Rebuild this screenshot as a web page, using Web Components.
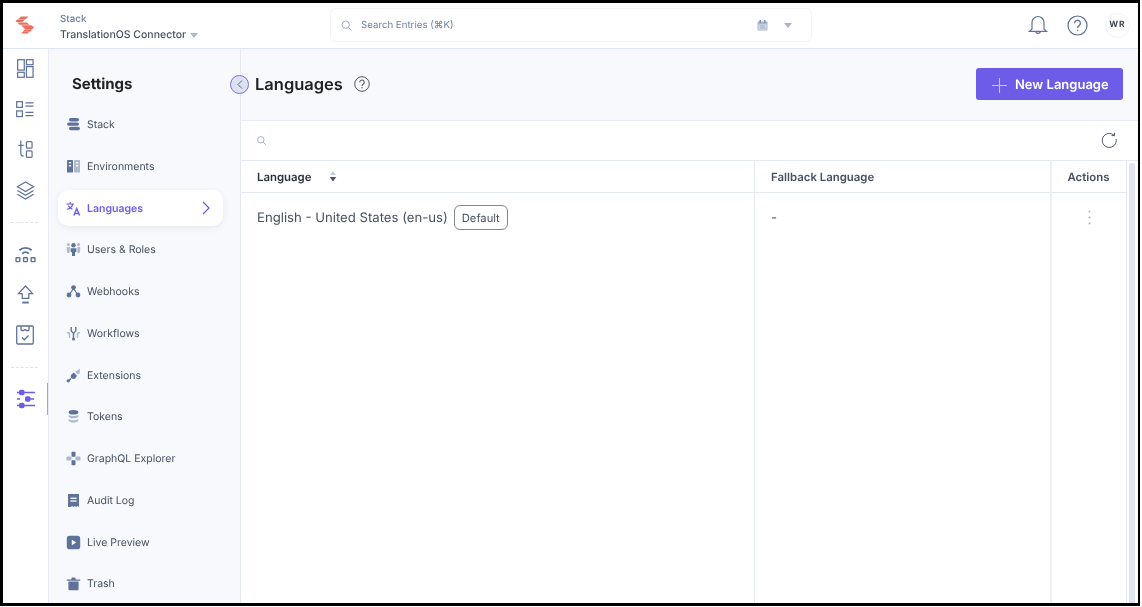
<!DOCTYPE html>
<html lang="en"><head><meta charset="utf-8"><title>Languages</title>
<style>
html,body{margin:0;padding:0;height:100%;overflow:hidden;background:#fff}
body{font-family:Inter,"Noto Sans",sans-serif;-webkit-font-smoothing:antialiased;text-rendering:geometricPrecision}
</style></head><body>
<app-shell>
  <top-bar slot="top"></top-bar>
  <side-rail slot="rail"></side-rail>
  <settings-nav slot="nav"></settings-nav>
  <languages-page slot="main"></languages-page>
</app-shell>
<script>
const ic = {
 stack:'<rect x="3" y="1" width="10" height="3.4" rx="1.7" fill="#5f7299"/><rect x="1" y="5.4" width="12" height="3.4" rx="1.7" fill="#5f7299"/><rect x="3" y="9.8" width="11" height="3.4" rx="1.7" fill="#5f7299"/>',
 env:'<rect x="1" y="1" width="6" height="12.5" rx=".6" fill="#5f7299"/><rect x="8" y="1" width="6" height="12.5" rx=".6" fill="#aebad0"/><rect x="2.8" y="3" width="2.4" height="1.4" fill="#fff"/><rect x="2.8" y="6" width="2.4" height="1.4" fill="#fff"/><rect x="9.8" y="3" width="2.4" height="1.4" fill="#fff"/><rect x="9.8" y="6" width="2.4" height="1.4" fill="#fff"/>',
 lang:'<g fill="none" stroke="#6c5ce7" stroke-width="1.2"><path d="M.5 3h7.500M4.200 1V3M6.800 3C6.200 5.400 4.200 7.400 1.200 8.400M2.200 4.400c.8 1.600 2.400 3 4.200 3.700"/><path d="M7.800 14.500l2.900-7 2.900 7M8.800 12.500h3.800" stroke-width="1.400"/></g>',
 users:'<circle cx="7.5" cy="3.2" r="2.2" fill="#5f7299"/><path d="M4.600 6.200h5.800v3.400L9 10.400v3.600H6v-3.600L4.600 9.600z" fill="#5f7299"/><circle cx="2.400" cy="2.600" r="1.500" fill="#aebad0"/><circle cx="12.600" cy="2.600" r="1.500" fill="#aebad0"/><path d="M.8 5h2.900v4.400L3.300 11H1.600L.8 9zM11.300 5h2.900V9l-.8 2h-1.700l-.4-1.600z" fill="#aebad0"/>',
 hook:'<path d="M7.500 4.500L3 11M7.500 4.500L12 11" stroke="#5f7299" stroke-width="1.200"/><circle cx="7.500" cy="3.600" r="2.400" fill="#5f7299"/><circle cx="3" cy="11" r="2.400" fill="#5f7299"/><circle cx="12" cy="11" r="2.400" fill="#5f7299"/>',
 flow:'<g fill="none" stroke-width="1.400"><path d="M5.200 1v3.600c0 1.400 2.300 1.400 2.300 3.200v5M9.800 1v3.600c0 1.400-2.300 1.400-2.300 3.200" stroke="#5f7299"/><path d="M1 6.500c1.500 0 2.600.8 2.600 2.400V12M14 6.500c-1.500 0-2.600.8-2.600 2.400V12" stroke="#aebad0"/></g><circle cx="7.500" cy="13" r="1.500" fill="#5f7299"/>',
 ext:'<path d="M7.800 4.500l3.200 3.200-1.500 2.500c-1 1-2.800 1-4 0-1-1-1.100-2.700 0-3.800z" fill="#5f7299"/><path d="M5 10.500L2.500 13" stroke="#5f7299" stroke-width="1.600"/><circle cx="2.200" cy="12.800" r="1.600" fill="#5f7299"/><path d="M9.500 3.500L14 .8l-.5 5L11.500 6.500z" fill="#aebad0"/>',
 token:'<ellipse cx="7.500" cy="3.200" rx="4.800" ry="2.300" fill="#5f7299"/><path d="M2.700 5.500c1 2 8.600 2 9.600 0v2.300c-1 2-8.600 2-9.600 0z" fill="#aebad0"/><path d="M2.700 9.700c1 2 8.600 2 9.600 0v2c-1 2.400-8.600 2.400-9.600 0z" fill="#aebad0"/>',
 graph:'<rect x="5.500" y=".8" width="4" height="5" rx=".8" fill="#5f7299"/><rect x="5.500" y="9.200" width="4" height="5" rx=".8" fill="#5f7299"/><rect x=".5" y="5.500" width="5" height="4" rx=".8" fill="#aebad0"/><rect x="9.500" y="5.500" width="5" height="4" rx=".8" fill="#aebad0"/>',
 audit:'<path d="M2 1h11v13l-1.400-.9-1.300.9-1.400-.9-1.400.9-1.400-.9-1.300.9L2 14z" fill="#5f7299"/><rect x="4.400" y="4.600" width="6.200" height="1.300" fill="#fff"/><rect x="4.400" y="7.400" width="6.200" height="1.300" fill="#fff"/>',
 live:'<rect x=".8" y=".8" width="13.400" height="13.400" rx="2.800" fill="#5f7299"/><path d="M5.800 4.800l4.400 2.700-4.400 2.700z" fill="#fff"/>',
 trash:'<path d="M.8 3.400h13.400v1.300H.8zM5.200 3.400l.6-2h3.400l.6 2" fill="#5f7299"/><path d="M2.400 5.600h10.200v7.400c0 .8-.6 1.300-1.300 1.300H3.700c-.7 0-1.300-.5-1.300-1.300z" fill="#5f7299"/>'
};

customElements.define('app-shell', class extends HTMLElement{
 constructor(){super();this.attachShadow({mode:'open'}).innerHTML=`<style>
 :host{display:block;box-sizing:border-box;width:1142px;height:607px;background:#fff;overflow:hidden;padding:0 2px 1px 0}
 .f{box-sizing:border-box;height:100%;border:solid #000;border-width:3px 2px 3px 3px;overflow:hidden}
 .g{display:grid;grid-template-columns:46px 192px 1fr;grid-template-rows:46px 1fr;height:100%;filter:blur(.3px)}
 .t{grid-column:1/-1;min-width:0}
 .c{min-height:0;min-width:0;overflow:hidden}
 .m{overflow:visible}
 </style><div class="f"><div class="g"><div class="t"><slot name="top"></slot></div><div class="c"><slot name="rail"></slot></div><div class="c"><slot name="nav"></slot></div><div class="c m"><slot name="main"></slot></div></div></div>`}
});

customElements.define('top-bar', class extends HTMLElement{
 constructor(){super();this.attachShadow({mode:'open'}).innerHTML=`<style>
 :host{display:flex;align-items:center;box-sizing:border-box;height:46px;border-bottom:1px solid #dde5f4;background:#fff;position:relative}
 .logo{width:45px;display:flex;justify-content:center;flex:none;margin-top:-1px}
 .st{width:282px;flex:none;padding-left:12px;box-sizing:border-box;margin-top:4px}
 .a{font-size:9.800px;font-weight:500;color:#6c80a5;line-height:12px;margin-bottom:2px}
 .b{font-size:10.500px;font-weight:500;color:#475161;line-height:13px;display:flex;align-items:center;gap:4px;white-space:nowrap}
 .b i{width:0;height:0;border:4px solid transparent;border-top:5px solid #a9b6cd;border-bottom:0;margin-top:1px}
 .s{box-sizing:border-box;width:482px;height:34px;margin-top:-1px;border:1px solid #f0f3f8;border-radius:6px;display:flex;align-items:center;padding-left:10px;flex:none}
 .s span{font-size:9.700px;color:#6c7fa3;margin-left:9px;flex:1;font-weight:400}
 .s svg.cal{margin-right:16px}
 .s i{width:0;height:0;border:4px solid transparent;border-top:5px solid #a9b6cd;border-bottom:0;margin-right:19px;margin-top:1px}
 .r{margin-left:auto;display:flex;align-items:center;margin-top:-1px}
 .r svg{display:block}
 .wr{width:25px;height:25px;border:1px solid #f3f5f9;border-radius:50%;box-sizing:border-box;font-size:8.500px;font-weight:700;letter-spacing:1px;color:#3e4653;display:flex;align-items:center;justify-content:center;margin:0 8px 0 17px}
 </style>
 <div class="logo"><svg width="21" height="18" viewBox="0 0 21 18"><g fill="#ea6f5f"><path d="M6 .5h7.500L10.500 3.200H3z"/><path d="M.5 5L2.500 3.500h7.500L7.500 6H1.500z"/><path d="M2 6.500h10l2.500 2.200H4.500z"/><path d="M6 9.200h10.500l2.500 2.400-1.500 1.400H10z"/><path d="M10 13.300h7.500L15 15.800H7.500z"/><path d="M7.500 16.100h6.500l-1.500 1.500H6z"/></g></svg></div>
 <div class="st"><div class="a">Stack</div><div class="b">TranslationOS Connector <i></i></div></div>
 <div class="s"><svg width="11" height="11" viewBox="0 0 11 11" fill="none" stroke="#a3b0c8" stroke-width="1"><circle cx="4.700" cy="4.700" r="3.700"/><path d="M7.500 7.500l3 3"/></svg><span>Search Entries (⌘K)</span>
 <svg class="cal" width="11" height="11" viewBox="0 0 11 11"><rect x=".5" y="1.500" width="10" height="9" rx="1" fill="#a9b6cd"/><rect x="1.500" y="4.500" width="8" height="5" fill="#dfe5ef"/><rect x="2.500" y="0" width="1.500" height="3" fill="#7d8eae"/><rect x="7" y="0" width="1.500" height="3" fill="#7d8eae"/><path d="M2.500 6h6M2.500 8h6" stroke="#8393b0" stroke-width=".8"/></svg><i></i></div>
 <div class="r">
 <svg width="22" height="22" viewBox="0 0 22 22" fill="none" stroke="#5f7299" stroke-width="1.200" style="margin-right:18px"><path d="M5 15V8.500a6 6 0 0 1 12 0V15l2.500 2.300h-17zM8.500 17.500a2.600 2.600 0 0 0 5 0"/></svg>
 <svg width="21" height="21" viewBox="0 0 21 21" fill="none" stroke="#5f7299" stroke-width="1.200"><circle cx="10.500" cy="10.500" r="9.500"/><path d="M7.600 8.200a2.900 2.900 0 1 1 4.500 2.400c-1 .7-1.600 1.300-1.600 2.500" stroke-width="1.300"/><circle cx="10.500" cy="15.500" r=".8" fill="#5f7299" stroke="none"/></svg>
 <div class="wr">WR</div></div>`}
});

customElements.define('rail-icon', class extends HTMLElement{
 constructor(){super();this.attachShadow({mode:'open'}).innerHTML=`<style>
 :host{display:flex;align-items:center;justify-content:center;height:40.500px;position:relative}
 :host([active])::after{content:"";position:absolute;right:-1px;top:4px;bottom:4px;width:1px;background:#a79ff2}
 </style><slot></slot>`}
});
customElements.define('side-rail', class extends HTMLElement{
 constructor(){super();const s=`fill="none" stroke="#5f7299" stroke-width="1.300"`;
 this.attachShadow({mode:'open'}).innerHTML=`<style>
 :host{display:block;box-sizing:border-box;height:100%;background:#fff;border-right:1px solid #e8ecf7;padding-right:1px}
 hr{border:0;border-top:1px dashed #dfe3e9;margin:11.500px 9px 11px 8px;height:0}
 svg{display:block}
 </style>
 <rail-icon style="margin-top:-.5px"><svg width="17" height="19" viewBox="0 0 18 20" ${s}><rect x=".7" y=".7" width="7" height="11"/><rect x=".7" y="14" width="7" height="5.300"/><rect x="10" y=".7" width="7" height="5.300"/><rect x="10" y="8" width="7" height="11.300"/></svg></rail-icon>
 <rail-icon><svg width="18" height="17" viewBox="0 0 19 18" ${s}><rect x=".7" y=".7" width="6" height="6"/><rect x=".7" y="10.500" width="6" height="6"/><path d="M10 2h8.500M10 5.500h8.500M10 12h8.500M10 15.500h8.500"/></svg></rail-icon>
 <rail-icon><svg width="15" height="19" viewBox="0 0 16 20" ${s}><path d="M3 .5V14.500c0 1.500 1 2.500 3 2.500M.5 5.500H6"/><rect x="9" y="1.500" width="6" height="7" rx="1"/><rect x="9" y="11.500" width="6" height="7" rx="1"/></svg></rail-icon>
 <rail-icon><svg width="19" height="19" viewBox="0 0 20 20" ${s}><path d="M10 1l8.500 5L10 11 1.500 6z"/><path d="M1.500 10L10 15l8.500-5M1.500 14L10 19l8.500-5"/></svg></rail-icon>
 <hr>
 <rail-icon><svg width="21" height="17" viewBox="0 0 22 18" fill="none" stroke="#5f7299" stroke-width="1.500"><path d="M4.500 4.500a9.500 9.500 0 0 1 13 0M7.500 8a5 5 0 0 1 7 0" stroke-width="2"/><rect x="1" y="12.500" width="4" height="4" rx=".5"/><rect x="9" y="12.500" width="4" height="4" rx=".5"/><rect x="17" y="12.500" width="4" height="4" rx=".5"/></svg></rail-icon>
 <rail-icon><svg width="17" height="19" viewBox="0 0 18 20" ${s}><path d="M9 1l7.500 8H12.500v5H5.500V9H1.500z"/><path d="M5.500 18.500h7" stroke-width="2"/></svg></rail-icon>
 <rail-icon><svg width="18" height="20" viewBox="0 0 18 20" ${s}><rect x=".7" y="1" width="16.600" height="18" rx="1"/><path d="M5 1v3.500q0 1 1 1 h1.500l1.500 -1 1.500 1H12q1 0 1 -1V1"/><path d="M6 12.500l2.300 2.300L12.500 10.500"/></svg></rail-icon>
 <hr style="margin-top:11px">
 <rail-icon active><svg width="19" height="20" viewBox="0 0 19 20"><g fill="none" stroke="#6c5ce7" stroke-width="1.300"><path d="M1 3.500h18M1 10h3M13 10h5M1 16.500h18"/></g><g fill="#6c5ce7"><rect x="3" y=".8" width="5.500" height="5.500" rx="1.800"/><rect x="9" y="7.200" width="5.500" height="5.500" rx="1.800"/><rect x="3" y="13.800" width="5.500" height="5.500" rx="1.800"/></g></svg></rail-icon>`}
});

customElements.define('nav-item', class extends HTMLElement{
 constructor(){super();this.attachShadow({mode:'open'})}
 connectedCallback(){const k=this.getAttribute('icon'),act=this.hasAttribute('active');
 this.shadowRoot.innerHTML=`<style>
 :host{display:flex;height:41.750px;align-items:center}
 .i{box-sizing:border-box;width:165px;height:${act?36:30}px;margin-left:9px;padding:0 13px 0 8px;display:flex;align-items:center;gap:6px;font-size:10.500px;color:#475161;border-radius:10px;${act?'background:#fff;box-shadow:0 2px 6px rgba(108,128,165,.12);color:#6c5ce7;font-weight:600;':''}}
 svg.k{width:15px;height:15px;flex:none}
 .t{flex:1}
 </style><div class="i"><svg class="k" viewBox="0 0 15 15">${ic[k]}</svg><span class="t"><slot></slot></span>${act?'<svg width="8" height="14" viewBox="0 0 8 14" fill="none" stroke="#6c5ce7" stroke-width="1.300"><path d="M1 1l6 6-6 6"/></svg>':''}</div>`}
});
customElements.define('settings-nav', class extends HTMLElement{
 constructor(){super();this.attachShadow({mode:'open'}).innerHTML=`<style>
 :host{display:block;box-sizing:border-box;height:100%;background:#f7f9fc;border-right:1px solid #e4e9f5;position:relative}
 h2{margin:0;padding:26px 0 0 23px;font-size:15px;font-weight:700;color:#222;line-height:18px;height:54.700px;box-sizing:border-box}
 </style><h2>Settings</h2><div>
 <nav-item icon="stack">Stack</nav-item>
 <nav-item icon="env">Environments</nav-item>
 <nav-item icon="lang" active>Languages</nav-item>
 <nav-item icon="users">Users &amp; Roles</nav-item>
 <nav-item icon="hook">Webhooks</nav-item>
 <nav-item icon="flow">Workflows</nav-item>
 <nav-item icon="ext">Extensions</nav-item>
 <nav-item icon="token">Tokens</nav-item>
 <nav-item icon="graph">GraphQL Explorer</nav-item>
 <nav-item icon="audit">Audit Log</nav-item>
 <nav-item icon="live">Live Preview</nav-item>
 <nav-item icon="trash">Trash</nav-item></div>`}
});

customElements.define('languages-page', class extends HTMLElement{
 constructor(){super();this.attachShadow({mode:'open'}).innerHTML=`<style>
 :host{display:flex;flex-direction:column;height:100%;background:#fff;position:relative}
 .h{box-sizing:border-box;height:72px;flex:none;background:#f7f9fc;border-bottom:1px solid #e8ecf5;display:flex;align-items:center;padding:0 15px 0 14px}
 h1{margin:0;font-size:16.500px;font-weight:600;color:#222;line-height:20px;margin-top:-2px}
 .q{margin-left:11px;margin-top:-2px}
 .btn{margin-left:auto;box-sizing:border-box;width:147px;height:32px;background:#6c5ce7;border-radius:3px;color:#fff;font-size:13px;font-weight:600;display:flex;align-items:center;padding:2px 0 0 16px;gap:8px;margin-top:-1px;white-space:nowrap}
 .tb{box-sizing:border-box;height:40px;flex:none;border-bottom:1px solid #e3e8f3;display:flex;align-items:center;justify-content:space-between;padding:0 20px 0 16px}
 .tw{display:grid;grid-template-columns:514px 297px 75px 1fr;grid-template-rows:32px 1fr;flex:1;min-height:0}
 .c{box-sizing:border-box;display:flex;align-items:center}
 .hd{border-bottom:1px solid #e3e8f3;font-size:11.400px;font-weight:600;height:32px}
 .c1{border-right:1px solid #e3e8f3;padding-left:16px}
 .c2{border-right:2px solid #efefef;padding-left:16px}
 .c3{border-right:1px solid #e3e8f3;padding-left:15.500px}
 .hd.c1{color:#2d333d}
 .hd.c2,.hd.c3{color:#475161}
 .rw{align-items:flex-start;padding-top:12px;font-size:13.150px;color:#475161}
 .sb{grid-row:1/3;grid-column:4;padding:2px 3px 0 2px;display:flex}
 .sb i{display:block;width:6px;background:#dfe4f0;border-radius:4px 4px 0 0}
 .sort{margin-left:18px;display:block}
 .bd{box-sizing:border-box;height:25px;padding:0 7px;margin-left:6px;border:1px solid #808792;border-radius:6px;font-size:11.200px;color:#475161;display:flex;align-items:center}
 .lang{line-height:27px}
 .dots{display:block;margin:5px 0 0 20px}
 .col{position:absolute;left:-11px;top:26px;width:19px;height:19px;box-sizing:border-box;border:1px solid #7c6cf0;border-radius:50%;background:#dde2f3;display:flex;align-items:center;justify-content:center;z-index:2}
 </style>
 <div class="col"><svg width="6" height="9" viewBox="0 0 6 9" fill="none" stroke="#5f6b80" stroke-width="1"><path d="M5 .5l-4 4 4 4"/></svg></div>
 <div class="h"><h1>Languages</h1>
 <svg class="q" width="16" height="16" viewBox="0 0 16 16" fill="none" stroke="#4e5866" stroke-width="1"><circle cx="8" cy="8" r="7.300"/><path d="M5.800 6.300a2.200 2.200 0 1 1 3.400 1.800c-.8.500-1.200 1-1.200 1.900" stroke-width="1.100"/><circle cx="8" cy="11.800" r=".7" fill="#4e5866" stroke="none"/></svg>
 <div class="btn"><svg width="15" height="15" viewBox="0 0 15 15" stroke="#c9c2f8" stroke-width="1.100"><path d="M7.500 0v15M0 7.500h15"/></svg>New Language</div></div>
 <div class="tb"><svg width="9" height="9" viewBox="0 0 9 9" fill="none" stroke="#a3b0c8" stroke-width="1"><circle cx="3.800" cy="3.800" r="3.200"/><path d="M6.200 6.200L8.800 8.800"/></svg>
 <svg width="17" height="17" viewBox="0 0 17 17" fill="none" stroke="#4e5866" stroke-width="1"><path d="M13.300 3.600a7 7 0 1 0 1.800 3.400"/><path d="M10.500 3.600h3V.8"/></svg></div>
 <div class="tw">
 <div class="c hd c1">Language<svg class="sort" width="8" height="11" viewBox="0 0 8 11"><path d="M4 0l3 4H1z" fill="#c5cedf"/><path d="M4 10.500L.7 6h6.600z" fill="#4e5866"/></svg></div>
 <div class="c hd c2">Fallback Language</div><div class="c hd c3">Actions</div>
 <div class="sb"><i></i></div>
 <div class="c rw c1"><span class="lang">English - United States (en-us)</span><span class="bd">Default</span></div>
 <div class="c rw c2"><span class="lang">-</span></div>
 <div class="c rw c3"><svg class="dots" width="3" height="15" viewBox="0 0 3 15" fill="#aeb4be"><circle cx="1.500" cy="1.500" r="1"/><circle cx="1.500" cy="7.500" r="1"/><circle cx="1.500" cy="13.500" r="1"/></svg></div>
 </div>`}
});
</script>
</body></html>
